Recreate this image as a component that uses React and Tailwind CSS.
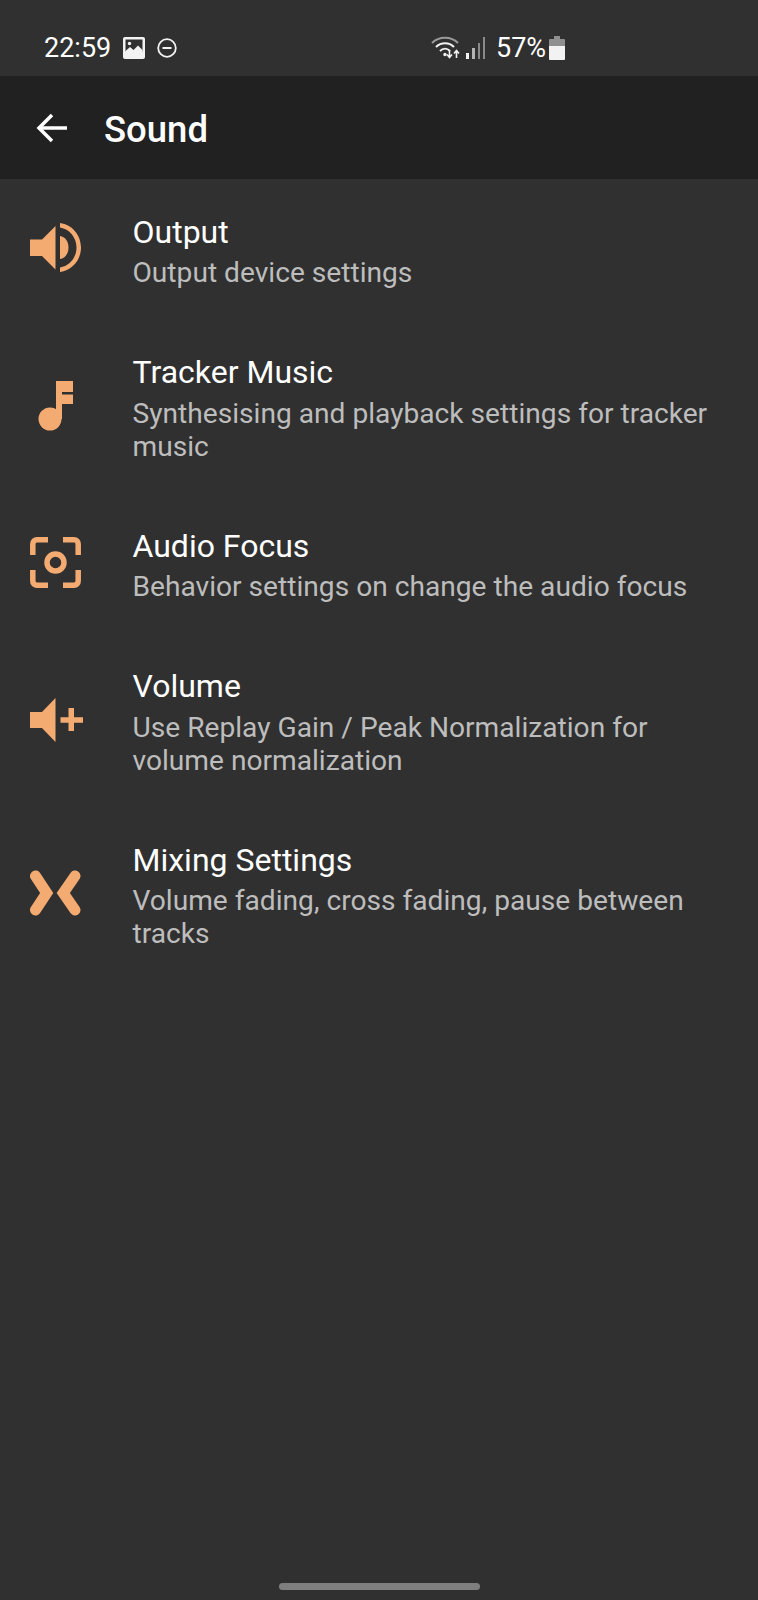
const SpeakerIcon = () => (
  <svg width="52" height="52" viewBox="0 0 52 52" fill="#f4ab72">
    <path d="M0 16.500H12L25.500 3V46.500L12 33H0Z" />
    <path d="M30 13C35 13.500 38.500 18.500 38.500 24.500C38.500 30.500 35 35.500 30 36Z" />
    <path d="M30 0C42 1.500 51 12 51 24.500C51 37 42 47.500 30 49V44.500C39.500 43 46.500 34.500 46.500 24.500C46.500 14.500 39.500 6 30 4.500Z" />
  </svg>
)

const NoteIcon = () => (
  <svg width="52" height="52" viewBox="0 0 52 52" fill="#f4ab72">
    <circle cx="20" cy="39" r="11.500" />
    <path d="M26 1H43V12H32V14.500H43V24H32V39H26Z" />
  </svg>
)

const FocusIcon = () => (
  <svg width="52" height="52" viewBox="0 0 52 52" fill="none" stroke="#f4ab72" strokeWidth="5.500">
    <path d="M2.800 18V7C2.800 4.500 4.500 2.800 7 2.800H18" />
    <path d="M33 2.800H44C46.500 2.800 48.200 4.500 48.200 7V18" />
    <path d="M2.800 33V44C2.800 46.500 4.500 48.200 7 48.200H18" />
    <path d="M33 48.200H44C46.500 48.200 48.200 46.500 48.200 44V33" />
    <circle cx="25.500" cy="25.500" r="8.500" />
  </svg>
)

const VolumeUpIcon = () => (
  <svg width="54" height="52" viewBox="0 0 54 52" fill="#f4ab72">
    <path d="M0 18H12L25.500 4V48L12 34H0Z" />
    <path d="M38.500 14H44V23.300H53V28.700H44V37H38.500V28.700H30.500V23.300H38.500Z" />
  </svg>
)

const MixIcon = () => (
  <svg width="52" height="52" viewBox="0 0 52 52" fill="none" stroke="#f4ab72" strokeWidth="11" strokeLinecap="round" strokeLinejoin="miter">
    <path d="M5.500 8L16.700 25L5.500 42" />
    <path d="M45 8L33.300 25L45 42" />
  </svg>
)

const items = [
  { title: "Output", sub: "Output device settings", icon: <SpeakerIcon /> },
  { title: "Tracker Music", sub: "Synthesising and playback settings for tracker music", icon: <NoteIcon /> },
  { title: "Audio Focus", sub: "Behavior settings on change the audio focus", icon: <FocusIcon /> },
  { title: "Volume", sub: "Use Replay Gain / Peak Normalization for volume normalization", icon: <VolumeUpIcon /> },
  { title: "Mixing Settings", sub: "Volume fading, cross fading, pause between tracks", icon: <MixIcon /> },
]

function StatusBar() {
  return (
    <div className="h-[76px] flex items-center pt-[20px] text-white text-[27px]">
      <span className="ml-[44px] w-[79px]">22:59</span>
      <svg width="22" height="22" viewBox="0 0 22 22">
        <rect width="22" height="22" rx="2" fill="#f2f2f2" />
        <rect x="2.500" y="2.500" width="17" height="12" fill="#303030" />
        <path d="M2.500 14L7 10L10.500 13L15 8.500L19.500 13V19.500H2.500Z" fill="#f2f2f2" />
        <circle cx="6.500" cy="6.500" r="1.700" fill="#f2f2f2" />
      </svg>
      <svg className="ml-[12px]" width="20" height="20" viewBox="0 0 20 20" fill="none" stroke="#f2f2f2" strokeWidth="1.800">
        <circle cx="10" cy="10" r="8.800" />
        <path d="M5.500 10H14.500" strokeWidth="2" />
      </svg>
      <svg className="ml-[254px]" width="30" height="26" viewBox="0 0 30 26" fill="none" stroke="#f2f2f2" strokeWidth="2">
        <path d="M1 8C8 1 20 1 27 8" stroke="#9a9a9a" />
        <path d="M5 12C10 7 18 7 23 12" />
        <path d="M9 16C12 13 16 13 19 16" />
        <circle cx="14" cy="19.500" r="1.700" fill="#f2f2f2" stroke="none" />
        <path d="M18.500 15V22M16 19.500L18.500 22.500L21 19.500" strokeWidth="1.600" />
        <path d="M25.500 23V16M23 18.500L25.500 15.500L28 18.500" strokeWidth="1.600" />
      </svg>
      <svg className="ml-[4px]" width="21" height="22" viewBox="0 0 21 22">
        <rect x="1" y="16" width="3" height="6" fill="#f2f2f2" />
        <rect x="7" y="11" width="3" height="11" fill="#b5b5b5" />
        <rect x="13" y="6" width="2" height="16" fill="#8a8a8a" />
        <rect x="18" y="0" width="2" height="22" fill="#8a8a8a" />
      </svg>
      <span className="ml-[10px]">57%</span>
      <svg className="ml-[3px]" width="16" height="24" viewBox="0 0 16 24">
        <path d="M5 0H11V3H15C15.500 3 16 3.500 16 4V10H0V4C0 3.500 0.500 3 1 3H5Z" fill="#8f8f8f" />
        <path d="M0 10H16V23C16 23.500 15.500 24 15 24H1C0.500 24 0 23.500 0 23Z" fill="#f2f2f2" />
      </svg>
    </div>
  )
}

export default function App() {
  return (
    <div className="w-[758px] h-[1600px] bg-[#303030] flex flex-col font-['Roboto',sans-serif]">
      <StatusBar />

      <div className="h-[103px] bg-[#212121] flex items-center text-white">
        <svg className="ml-[36px]" width="32" height="30" viewBox="0 0 32 30" fill="none" stroke="white" strokeWidth="3.500">
          <path d="M31 15H3" />
          <path d="M16 2L3 15L16 28" />
        </svg>
        <span className="ml-[36px] mt-[6px] text-[36.500px] font-medium">Sound</span>
      </div>

      <div className="flex-1">
        {items.map((item) => (
          <div key={item.title} className="flex items-center pl-[30px] pr-[40px] py-[30.500px]">
            <div className="w-[102.500px] shrink-0 flex items-center">{item.icon}</div>
            <div className="min-w-0">
              <div className="text-[32px] leading-[44px] text-white">{item.title}</div>
              <div className="mt-[2.500px] text-[28.150px] leading-[33px] text-[#bdbdbd]">{item.sub}</div>
            </div>
          </div>
        ))}
      </div>

      <div className="h-[17px] flex justify-center">
        <div className="w-[201px] h-[7px] rounded-full bg-[#7f7f7f]" />
      </div>
    </div>
  )
}
